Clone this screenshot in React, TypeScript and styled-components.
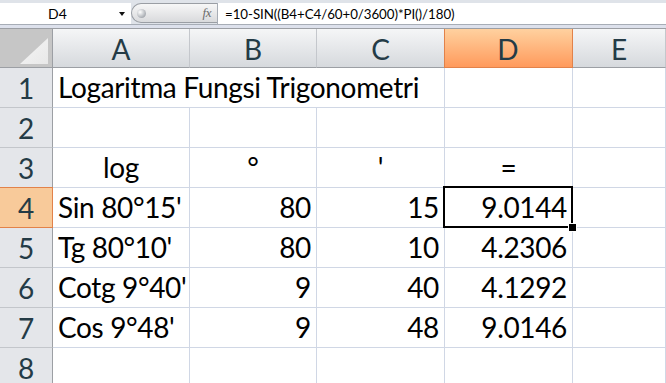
import React from "react";
import styled, { createGlobalStyle, css } from "styled-components";

const GlobalStyle = createGlobalStyle`
  html, body { margin: 0; padding: 0; background: #ffffff; overflow: hidden; }
  body { width: 666px; height: 383px; font-family: "Lato", "Liberation Sans", sans-serif; }
  * { box-sizing: border-box; }
`;

const CELL_FONT = `"Lato", "Liberation Sans", sans-serif`;

const Page = styled.div`
  width: 666px;
  height: 383px;
  overflow: hidden;
  display: flex;
  flex-direction: column;
  background: #ffffff;
`;

const FormulaBar = styled.div`
  height: 25px;
  flex: none;
  display: flex;
  align-items: stretch;
  padding-top: 3px;
  background: #dfe3e9;
  border-bottom: 1px solid #a7adb6;
`;

const NameBox = styled.div`
  width: 131px;
  flex: none;
  display: flex;
  align-items: center;
  background: #ffffff;
  font-family: ${CELL_FONT};
  font-size: 14px;
  color: #000;
`;

const NameText = styled.span`
  width: 115px;
  text-align: center;
`;

const DropArrow = styled.span`
  width: 0;
  height: 0;
  border-left: 3.5px solid transparent;
  border-right: 3.5px solid transparent;
  border-top: 4px solid #111;
  margin-left: 4px;
`;

const Expander = styled.div`
  width: 86px;
  flex: none;
  display: flex;
  align-items: center;
  justify-content: space-between;
  padding: 0 6px 0 5px;
  background: linear-gradient(#f7f7f7, #d9dadc);
  border: 1px solid #9a9ea4;
  border-right: none;
  border-radius: 11px 0 0 11px;
  margin-bottom: 1px;
`;

const Knob = styled.span`
  width: 9px;
  height: 9px;
  border-radius: 50%;
  background: radial-gradient(circle at 35% 35%, #ffffff, #a9adb3 70%, #8c9096);
`;

const Fx = styled.span`
  font-family: "Liberation Serif", serif;
  font-style: italic;
  font-size: 13px;
  color: #6b6b6b;
  letter-spacing: -0.5px;
`;

const FormulaInput = styled.div`
  flex: 1;
  display: flex;
  align-items: center;
  padding-left: 7px;
  background: #ffffff;
  border-left: 1px solid #a7adb6;
  font-family: ${CELL_FONT};
  font-size: 13.3px;
  letter-spacing: -0.05px;
  color: #000;
  white-space: nowrap;
`;

const Band = styled.div`
  height: 3px;
  flex: none;
  background: #dde1ec;
`;

const Sheet = styled.div`
  flex: 1;
  display: grid;
  grid-template-columns: 53px 137px 127px 128px 128px 1fr;
  grid-template-rows: 39px repeat(8, 40px);
  border-top: 1px solid #9c9fa4;
`;

const Corner = styled.div`
  background: #c6c6c6;
  border-right: 1px solid #9c9fa4;
  border-bottom: 1px solid #9c9fa4;
  position: relative;
  &::after {
    content: "";
    position: absolute;
    right: 4px;
    bottom: 3px;
    width: 28px;
    height: 26px;
    background: linear-gradient(135deg, #f6f6f6, #e8e8e8);
    clip-path: polygon(100% 0, 100% 100%, 0 100%);
  }
`;

const ColHead = styled.div<{ $active?: boolean }>`
  display: flex;
  align-items: center;
  justify-content: center;
  padding-top: 1px;
  font-family: ${CELL_FONT};
  font-size: 28px;
  color: #243b46;
  background: linear-gradient(#f5f6f7, #d6d9dd);
  border-right: 1px solid #c4c7cc;
  border-bottom: 1px solid #9c9fa4;
  ${(p) =>
    p.$active &&
    css`
      background: linear-gradient(#ffd19f, #ff9a5c);
      border-right: 1px solid #e2824a;
      border-bottom: 1px solid #e2824a;
      box-shadow: inset 1px 0 0 #e2824a;
      margin-left: -1px;
    `}
`;

const RowHead = styled.div<{ $active?: boolean }>`
  display: flex;
  align-items: center;
  justify-content: center;
  font-family: ${CELL_FONT};
  font-size: 28px;
  line-height: 1;
  color: #243b46;
  background: #e4e6ea;
  border-right: 1px solid #9c9fa4;
  border-bottom: 1px solid #c3c6cb;
  ${(p) =>
    p.$active &&
    css`
      background: #f8ca9a;
      border-right: 1px solid #e2824a;
      border-bottom: 1px solid #e2824a;
      box-shadow: 0 -1px 0 #e2824a;
    `}
`;

const Cell = styled.div<{ $align?: "left" | "right" | "center"; $span?: number }>`
  position: relative;
  display: flex;
  align-items: flex-end;
  justify-content: ${(p) =>
    p.$align === "right" ? "flex-end" : p.$align === "center" ? "center" : "flex-start"};
  padding: 0 5px 6px 5px;
  font-family: ${CELL_FONT};
  font-size: 28px;
  letter-spacing: -0.35px;
  line-height: 1;
  color: #000;
  white-space: nowrap;
  border-right: 1px solid #d0d7e5;
  border-bottom: 1px solid #d0d7e5;
  ${(p) => p.$span && css`grid-column: span ${p.$span};`}
`;

const Selection = styled.div`
  position: absolute;
  z-index: 2;
  top: -2px;
  left: -2px;
  right: -1px;
  bottom: -1px;
  border: 2px solid #000;
  pointer-events: none;
`;

const FillHandle = styled.div`
  position: absolute;
  z-index: 3;
  right: -6px;
  bottom: -6px;
  width: 9px;
  height: 9px;
  background: #000;
  border: 1px solid #fff;
`;

type Row = { a: string; b: string; c: string; d: string };

const rows: Row[] = [
  { a: "Sin 80°15'", b: "80", c: "15", d: "9.0144" },
  { a: "Tg 80°10'", b: "80", c: "10", d: "4.2306" },
  { a: "Cotg 9°40'", b: "9", c: "40", d: "4.1292" },
  { a: "Cos 9°48'", b: "9", c: "48", d: "9.0146" },
];

export default function App() {
  return (
    <>
      <GlobalStyle />
      <Page>
        <FormulaBar>
          <NameBox>
            <NameText>D4</NameText>
            <DropArrow />
          </NameBox>
          <Expander>
            <Knob />
            <Fx>fx</Fx>
          </Expander>
          <FormulaInput>=10-SIN((B4+C4/60+0/3600)*PI()/180)</FormulaInput>
        </FormulaBar>
        <Band />
        <Sheet>
          <Corner />
          {["A", "B", "C", "D", "E"].map((c) => (
            <ColHead key={c} $active={c === "D"}>
              {c}
            </ColHead>
          ))}

          <RowHead>1</RowHead>
          <Cell $span={3}>Logaritma Fungsi Trigonometri</Cell>
          <Cell />
          <Cell />

          <RowHead>2</RowHead>
          <Cell />
          <Cell />
          <Cell />
          <Cell />
          <Cell />

          <RowHead>3</RowHead>
          <Cell $align="center">log</Cell>
          <Cell $align="center">°</Cell>
          <Cell $align="center">'</Cell>
          <Cell $align="center">=</Cell>
          <Cell />

          {rows.map((r, i) => {
            const n = i + 4;
            const active = n === 4;
            return (
              <React.Fragment key={n}>
                <RowHead $active={active}>{n}</RowHead>
                <Cell>{r.a}</Cell>
                <Cell $align="right">{r.b}</Cell>
                <Cell $align="right">{r.c}</Cell>
                <Cell $align="right">
                  {r.d}
                  {active && (
                    <Selection>
                      <FillHandle />
                    </Selection>
                  )}
                </Cell>
                <Cell />
              </React.Fragment>
            );
          })}

          <RowHead>8</RowHead>
          <Cell />
          <Cell />
          <Cell />
          <Cell />
          <Cell />
        </Sheet>
      </Page>
    </>
  );
}
